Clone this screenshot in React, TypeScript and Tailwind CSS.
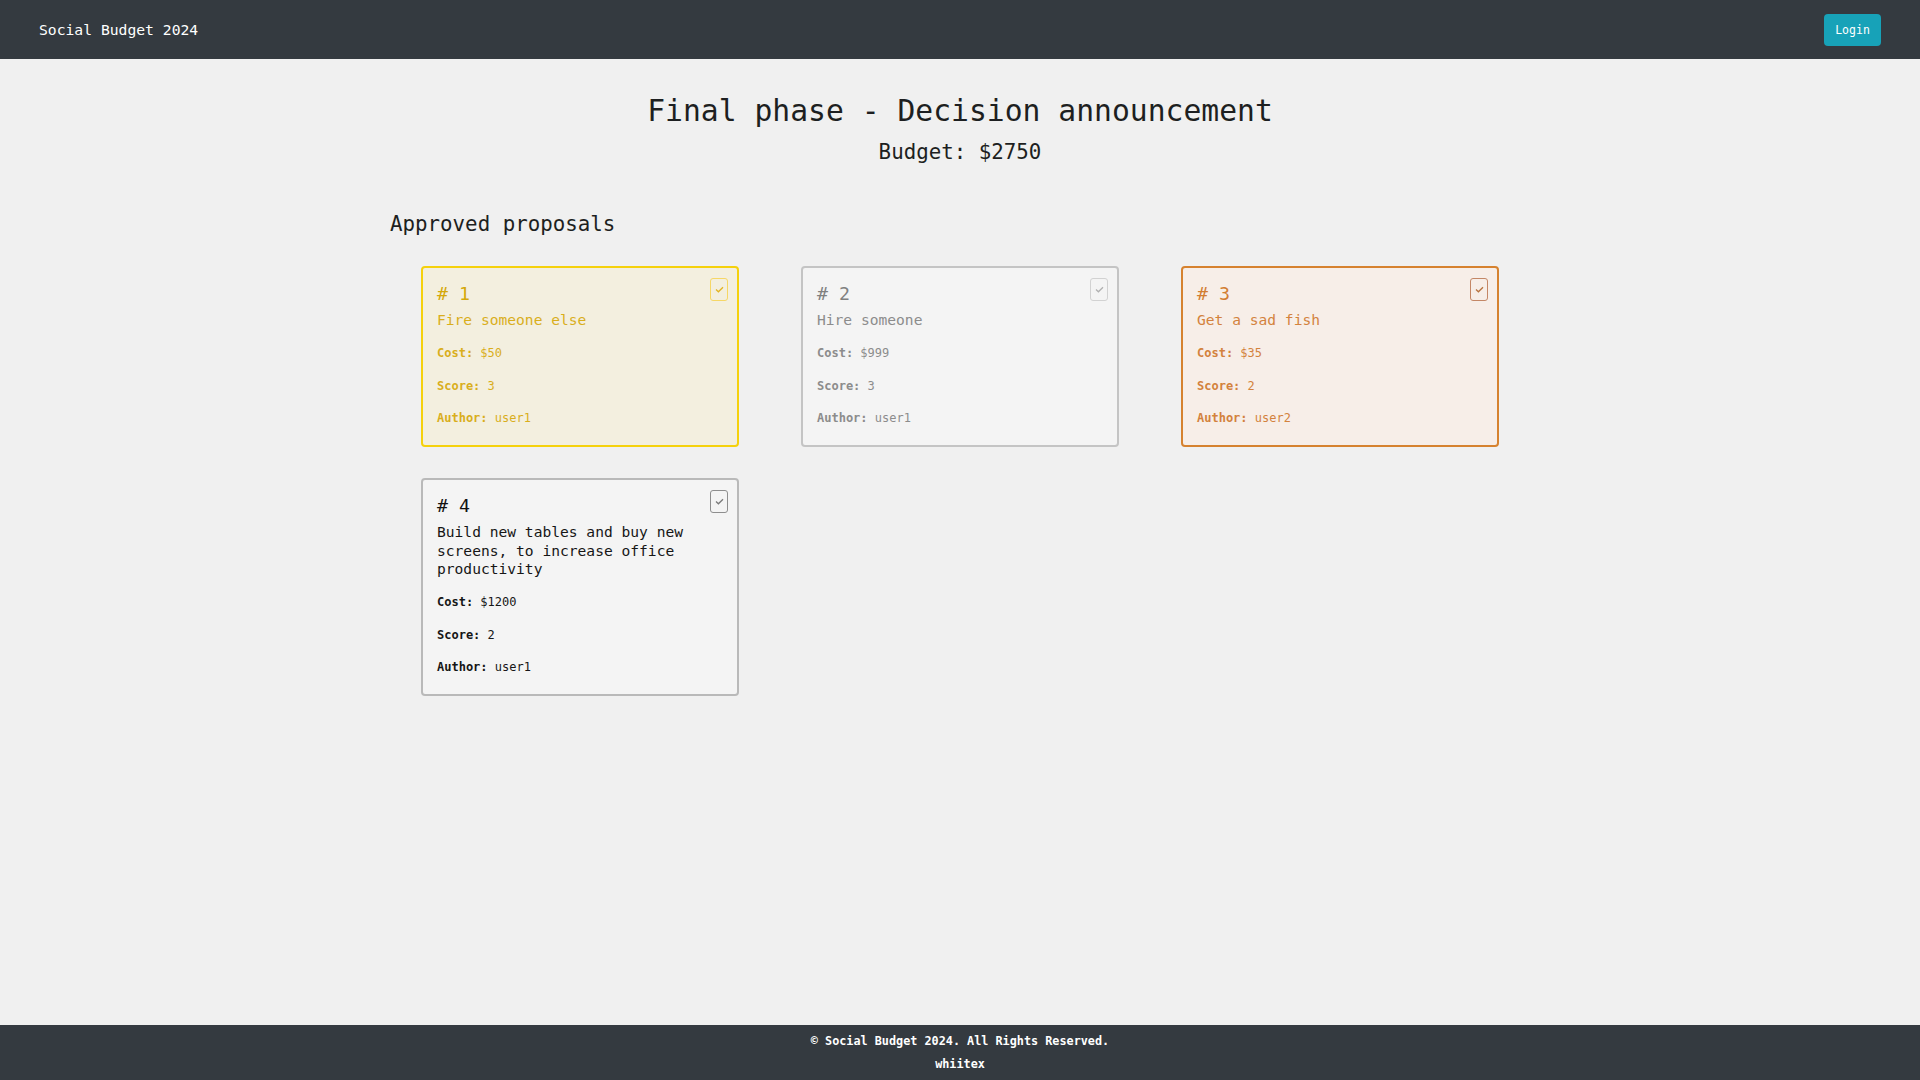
import React from "react";

type Card = {
  id: number;
  title: string;
  cost: string;
  score: number;
  author: string;
  cardCls: string;
  textCls: string;
  headCls: string;
  boxCls: string;
  checkColor: string;
};

const cards: Card[] = [
  {
    id: 1,
    title: "Fire someone else",
    cost: "$50",
    score: 3,
    author: "user1",
    cardCls: "border-2 border-[#f5d10c] bg-[#f3efdf]",
    textCls: "text-[#d9ae1c]",
    headCls: "text-[#d4a80a]",
    boxCls: "border-[#f6d766]",
    checkColor: "#e2b423",
  },
  {
    id: 2,
    title: "Hire someone",
    cost: "$999",
    score: 3,
    author: "user1",
    cardCls: "border-2 border-[#c4c4c4] bg-[#f4f4f4]",
    textCls: "text-[#8c8c8c]",
    headCls: "text-[#808080]",
    boxCls: "border-[#d2d2d2]",
    checkColor: "#b0b0b0",
  },
  {
    id: 3,
    title: "Get a sad fish",
    cost: "$35",
    score: 2,
    author: "user2",
    cardCls: "border-2 border-[#d6822f] bg-[#f7eee8]",
    textCls: "text-[#d3823d]",
    headCls: "text-[#d27d32]",
    boxCls: "border-[#c48766]",
    checkColor: "#b8733f",
  },
  {
    id: 4,
    title: "Build new tables and buy new screens, to increase office productivity",
    cost: "$1200",
    score: 2,
    author: "user1",
    cardCls: "border-2 border-[#b9b9b9] bg-[#f4f4f4]",
    textCls: "text-[#161616]",
    headCls: "text-[#111111]",
    boxCls: "border-[#8e8e8e]",
    checkColor: "#7a7a7a",
  },
];

function ProposalCard({ c }: { c: Card }) {
  return (
    <div className={`relative mx-[31px] rounded-[4px] pt-[14px] pb-[17px] px-[14px] ${c.cardCls}`}>
      <div
        className={`absolute top-[10px] right-[9px] w-[18px] h-[23px] rounded-[3px] border-[1.5px] flex items-center justify-center ${c.boxCls}`}
      >
        <svg width="9" height="7" viewBox="0 0 9 7" fill="none">
          <polyline points="1,3.6 3.4,5.8 8,1.2" stroke={c.checkColor} strokeWidth="1.3" fill="none" />
        </svg>
      </div>
      <div className={`text-[18.3px] leading-[24px] ${c.headCls}`}># {c.id}</div>
      <div className={`mt-[5px] text-[14.6px] leading-[18.5px] ${c.textCls}`}>{c.title}</div>
      <div className={`mt-[13.5px] flex flex-col gap-[12.6px] text-[12px] leading-[20px] ${c.textCls}`}>
        <div>
          <span className="font-bold">Cost:</span> {c.cost}
        </div>
        <div>
          <span className="font-bold">Score:</span> {c.score}
        </div>
        <div>
          <span className="font-bold">Author:</span> {c.author}
        </div>
      </div>
    </div>
  );
}

export default function App() {
  return (
    <div className="min-h-screen flex flex-col bg-[#f0f0f0] font-['DejaVu_Sans_Mono',monospace] text-[#212529]">
      <nav className="h-[59px] bg-[#343a40] flex items-center justify-between pl-[39px] pr-[39px]">
        <span className="text-white text-[14.7px] leading-[20px]">Social Budget 2024</span>
        <button className="w-[57px] h-[32px] rounded-[4px] bg-[#17a2b8] text-white text-[11.5px] leading-[16px] flex items-center justify-center">
          Login
        </button>
      </nav>

      <main className="flex-1 pt-[34px]">
        <h2 className="text-center text-[29.7px] leading-[36px] text-[#1d1f21]">Final phase - Decision announcement</h2>
        <div className="mt-[10px] text-center text-[20.8px] leading-[26px] text-[#1d1f21]">Budget: $2750</div>

        <div className="w-[1140px] mx-auto mt-[46px]">
          <h4 className="text-[20.8px] leading-[26px] text-[#1d1f21]">Approved proposals</h4>
          <div className="mt-[29px] grid grid-cols-3 gap-y-[31px] items-start">
            {cards.map((c) => (
              <ProposalCard key={c.id} c={c} />
            ))}
          </div>
        </div>
      </main>

      <footer className="bg-[#343a40] pt-[6px] pb-[6px] flex flex-col items-center gap-[3px] text-white text-[11.8px] leading-[20px] font-bold">
        <div>© Social Budget 2024. All Rights Reserved.</div>
        <div>whiitex</div>
      </footer>
    </div>
  );
}
